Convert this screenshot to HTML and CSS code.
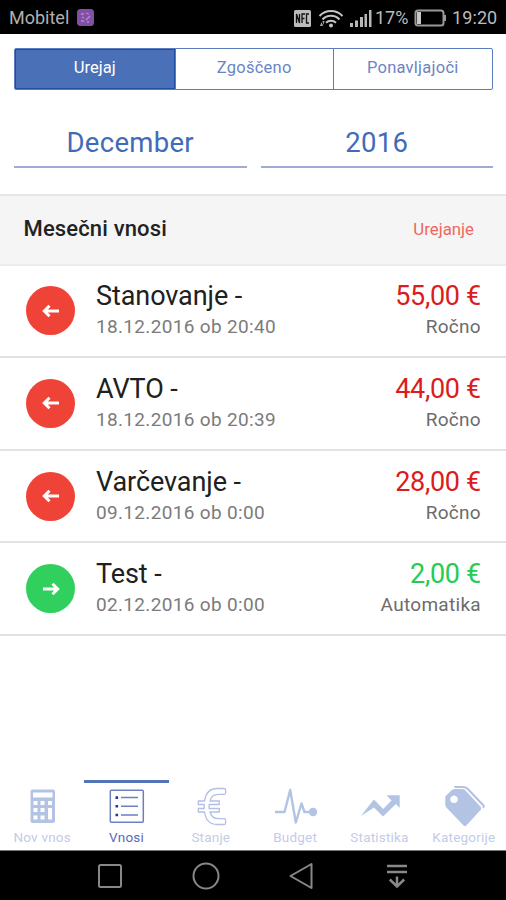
FILE: index.html
```html
<!DOCTYPE html>
<html lang="sl">
<head>
<meta charset="utf-8">
<title>Mesečni vnosi</title>
<link rel="stylesheet" href="styles.css">
</head>
<body>
<div class="screen">
  <header class="status">
    <span class="carrier">Mobitel</span>
    <svg class="carrier-icon" width="17" height="17" viewBox="0 0 17 17"><rect width="17" height="17" rx="3.5" fill="#8050a4"/><path d="M4 5h3M9 4l3 1M5 8l2 1M9 11l4-4M4 12h3M10 13h2" stroke="#b98bd5" stroke-width="1.3" fill="none"/></svg>
    <svg class="status-icons" width="80" height="22" viewBox="0 0 80 22">
      <rect x="1" y="3" width="17" height="17" rx="1.5" fill="#bcbcbc"/>
      <path d="M3.5 16V7l3 9V7M9 16V7h3M9 11.5h2.5M16 7h-2.500v9H16" fill="none" stroke="#111" stroke-width="1.3"/>
      <g fill="none" stroke="#c4c4c4" stroke-width="2"><path d="M26.500 9a16 16 0 0 1 23 0M29.500 12.500a11.500 11.500 0 0 1 17 0M33 15.800a7 7 0 0 1 10 0"/></g>
      <circle cx="38" cy="18.500" r="2" fill="#c4c4c4"/>
      <path d="M27 19l1.500-4 1.500 4zM29.500 14h2l-1 4z" fill="#aaa"/>
      <path d="M57 16h3v4h-3zM62 13.500h3V20h-3zM67 10h3v10h-3zM71.500 7h2.500v13h-2.500zM76 3h2.500v17H76z" fill="#b8b8b8"/>
    </svg>
    <span class="percent">17%</span>
    <svg class="battery" width="34" height="20" viewBox="0 0 34 20"><rect x="1.500" y="2.500" width="28" height="15" rx="2.500" fill="none" stroke="#9a9a9a" stroke-width="2"/><path d="M3 4h4v12H3z" fill="#c8c8c8"/><path d="M31 7v6" stroke="#9a9a9a" stroke-width="2"/></svg>
    <span class="clock">19:20</span>
  </header>

  <nav class="segments">
    <span class="segment on">Urejaj</span><span class="segment">Zgoščeno</span><span class="segment">Ponavljajoči</span>
  </nav>

  <div class="period">
    <span class="period-field">December</span>
    <span class="period-field">2016</span>
  </div>

  <div class="section">
    <h1 class="section-title">Mesečni vnosi</h1>
    <span class="section-edit">Urejanje</span>
  </div>

  <main class="entries">
    <article class="entry out">
      <span class="dot"><svg width="18" height="14" viewBox="0 0 18 14"><path d="M17 7H3M7.500 1.800L2.300 7l5.200 5.200"/></svg></span>
      <div class="what"><span class="name">Stanovanje -</span><span class="date">18.12.2016 ob 20:40</span></div>
      <div class="sum"><span class="amount">55,00 €</span><span class="kind">Ročno</span></div>
    </article>
    <article class="entry out">
      <span class="dot"><svg width="18" height="14" viewBox="0 0 18 14"><path d="M17 7H3M7.500 1.800L2.300 7l5.200 5.200"/></svg></span>
      <div class="what"><span class="name">AVTO -</span><span class="date">18.12.2016 ob 20:39</span></div>
      <div class="sum"><span class="amount">44,00 €</span><span class="kind">Ročno</span></div>
    </article>
    <article class="entry out">
      <span class="dot"><svg width="18" height="14" viewBox="0 0 18 14"><path d="M17 7H3M7.500 1.800L2.300 7l5.200 5.200"/></svg></span>
      <div class="what"><span class="name">Varčevanje -</span><span class="date">09.12.2016 ob 0:00</span></div>
      <div class="sum"><span class="amount">28,00 €</span><span class="kind">Ročno</span></div>
    </article>
    <article class="entry in">
      <span class="dot"><svg width="18" height="14" viewBox="0 0 18 14"><path d="M1 7h14M10.500 1.800L15.700 7l-5.200 5.200"/></svg></span>
      <div class="what"><span class="name">Test -</span><span class="date">02.12.2016 ob 0:00</span></div>
      <div class="sum"><span class="amount">2,00 €</span><span class="kind">Automatika</span></div>
    </article>
  </main>

  <nav class="tabs">
    <div class="tab">
      <svg width="84" height="44" viewBox="0 784 84 44"><path fill="#b3c3e3" fill-rule="evenodd" d="M32.500 789.500h20.500a2 2 0 0 1 2 2v29.500a2 2 0 0 1-2 2H32.500a2 2 0 0 1-2-2v-29.500a2 2 0 0 1 2-2zM33 792.500v5h19.500v-5zM33.500 801v4h4v-4zM40.500 801v4h4v-4zM48 801v4h4v-4zM33.500 808v4h4v-4zM40.500 808v4h4v-4zM33.500 815.500v4h4v-4zM40.500 815.500v4h4v-4zM48 808v11.500h4V808z"/></svg>
      <span class="tab-label">Nov vnos</span>
    </div>
    <div class="tab on">
      <svg width="84" height="44" viewBox="84.500 784 84 44"><rect x="110.800" y="790.300" width="33" height="32" rx="1" fill="none" stroke="#6d80bf" stroke-width="1.500"/><path d="M121.500 797.500h17M121.500 806.300h17M121.500 815h17" stroke="#6d80bf" stroke-width="1.600"/><path d="M116 796.300h2.600v2.600H116zM116 805h2.600v2.600H116zM116 813.700h2.600v2.600H116z" fill="#303098"/></svg>
      <span class="tab-label">Vnosi</span>
    </div>
    <div class="tab">
      <svg width="84" height="44" viewBox="168.700 784 84 44"><path fill="none" stroke="#b3bfe3" stroke-width="1.300" stroke-linejoin="round" d="M224 788.500h-7q-11 0-12.700 12.500h-6.300v3.500h5.900v4h-5.900v3.500h6.300q1.700 12.500 12.700 12.500h7q1.300 0 1.300-1.500v-2.800q0-1.500-1.300-1.500h-6q-6.500 0-8.300-6.700h9.300v-3.500h-10.200v-4h10.200v-3.500h-9.300q1.300-6.700 8.300-6.700h6q1.300 0 1.300-1.500v-2.800q0-1.500-1.300-1.500z"/></svg>
      <span class="tab-label">Stanje</span>
    </div>
    <div class="tab">
      <svg width="84" height="44" viewBox="253 784 84 44"><path d="M275 812h9.500l5.700-22 5.600 32.500 5.700-19 3 8.500h6" fill="none" stroke="#b3c3e3" stroke-width="2.400" stroke-linejoin="round"/><circle cx="313" cy="812" r="4.200" fill="#b3c3e3"/></svg>
      <span class="tab-label">Budget</span>
    </div>
    <div class="tab">
      <svg width="84" height="44" viewBox="337.300 784 84 44"><path fill="#b3c3e3" d="M361.200 816l13-16.500 9.300 9.500 8.300-8.500-5-5.300H400V808l-3.700-4-13 12.500-9-9z"/></svg>
      <span class="tab-label">Statistika</span>
    </div>
    <div class="tab">
      <svg width="84" height="44" viewBox="421.700 784 84 44"><path fill="#b3c3e3" fill-rule="evenodd" d="M445 796.500l6.500-6.500q1.500-1 3.500-1h6.500q2 0 3.500 1.300l15.500 16.700q1 1.500 0 2.700L466 825.500q-1.300 1-2.700 0L446.500 808q-1.500-1.500-1.500-3zM453.700 795.500a3.800 3.800 0 1 0 .01 0z"/><path d="M454 787h8.500q3 0 5 2l15.700 16.500q.800 1-.5 2.200" fill="none" stroke="#b3c3e3" stroke-width="2.200"/></svg>
      <span class="tab-label">Kategorije</span>
    </div>
  </nav>

  <footer class="softkeys">
    <svg width="26" height="30" viewBox="0 0 26 30"><rect x="2" y="4" width="22" height="22" rx="1.500"/></svg>
    <svg width="28" height="30" viewBox="0 0 28 30"><circle cx="14" cy="15" r="12.500"/></svg>
    <svg width="26" height="30" viewBox="0 0 26 30"><path d="M22.500 3v24L1.500 15z" stroke-linejoin="round"/></svg>
    <svg width="22" height="30" viewBox="0 0 22 30"><path d="M1 5h20M1 11h20M11 15.500v10M3.800 18.500l7.200 7 7.200-7" stroke-width="2.500"/></svg>
  </footer>
</div>
</body>
</html>
```
FILE: styles.css
```css
* { box-sizing: border-box; }

body {
  margin: 0;
  font-family: Roboto, "Liberation Sans", sans-serif;
  background: #fff;
}

.screen {
  width: 506px;
  height: 900px;
  display: flex;
  flex-direction: column;
  overflow: hidden;
  white-space: nowrap;
}

.status {
  flex: none;
  height: 34px;
  background: #000;
  color: #bcbcbc;
  display: flex;
  align-items: center;
  padding: 1px 8px 0 9px;
}
.carrier { font-size: 18px; width: 68px; color: #b0b0b0; }
.carrier-icon { margin: -1px 0 0; }
.status-icons { margin-left: 199px; }
.percent { font-size: 18px; width: 34px; margin-left: 2px; }
.battery { margin-left: 5px; }
.clock { font-size: 18px; letter-spacing: .1px; margin-left: 4px; }

.segments {
  flex: none;
  display: flex;
  height: 42px;
  margin: 14px 13.500px 0 14px;
  border: 1.500px solid #5b7cbe;
  border-radius: 2px;
  overflow: hidden;
}
.segment {
  flex: 1;
  border-left: 1px solid #5b7cbe;
  color: #6c84c3;
  font-size: 16.500px;
  line-height: 38px;
  letter-spacing: .25px;
  text-align: center;
}
.segment.on {
  background: #4a70b7;
  border: 1px solid #1f4fa2;
  line-height: 36px;
  letter-spacing: 0;
  color: #fff;
}

.period {
  flex: none;
  display: flex;
  gap: 14px;
  margin: 24px 13px 0 14px;
}
.period-field {
  flex: 1;
  height: 54px;
  border-bottom: 2px solid #9fabd5;
  color: #416bb9;
  font-size: 27.500px;
  line-height: 58px;
  letter-spacing: .3px;
  text-align: center;
}

.section {
  flex: none;
  height: 72px;
  margin-top: 26px;
  background: #f5f5f5;
  border-top: 2px solid #e6e6e6;
  border-bottom: 2px solid #ececec;
  padding: 0 32px 3px 23.500px;
  display: flex;
  justify-content: space-between;
  align-items: center;
}
.section-title { margin: 0; font-size: 22px; font-weight: 500; letter-spacing: .15px; color: #222; }
.section-edit { font-size: 16.800px; color: #f2665e; }

.entries { flex: none; margin-top: -1px; }
.entry {
  height: 92.800px;
  border-bottom: 2px solid #e2e2e2;
  display: flex;
  padding: 0 25px 0 26px;
}
.dot {
  width: 49px;
  height: 49px;
  margin-top: 21px;
  border-radius: 50%;
  display: flex;
  align-items: center;
  justify-content: center;
}
.dot path { fill: none; stroke: #fff; stroke-width: 3; }
.out .dot { background: #f04337; }
.in .dot { background: #31cf5d; }
.what, .sum { display: flex; flex-direction: column; padding-top: 14px; }
.what { margin-left: 21px; flex: 1; }
.sum { text-align: right; }
.name, .amount { font-size: 27px; line-height: 34px; }
.name { color: #202020; letter-spacing: -.08px; }
.amount { letter-spacing: -.3px; }
.out .amount { color: #dc1c1c; }
.in .amount { color: #27cb50; }
.date, .kind { font-size: 19px; line-height: 28px; color: #7b7b7b; }
.date { letter-spacing: .33px; }
.kind { color: #6c6c6c; letter-spacing: .3px; }

.tabs {
  flex: none;
  display: flex;
  height: 70px;
  margin-top: auto;
}
.tab {
  flex: 1;
  border-top: 3px solid transparent;
  display: flex;
  flex-direction: column;
  align-items: center;
  color: #c3cbe7;
}
.tab.on { border-top-color: #5474b8; color: #5a69ba; }
.tab svg { flex: none; margin-top: 1px; }
.tab-label { font-size: 13.500px; line-height: 18px; letter-spacing: .2px; }

.softkeys {
  flex: none;
  height: 50px;
  background: #000;
  border-top: 1px solid #777;
  display: flex;
  align-items: center;
  padding-left: 97px;
}
.softkeys svg { fill: none; stroke: #888; stroke-width: 2; }
.softkeys svg + svg { margin-left: 69px; }
.softkeys svg:last-child { margin-left: 71px; }
```
